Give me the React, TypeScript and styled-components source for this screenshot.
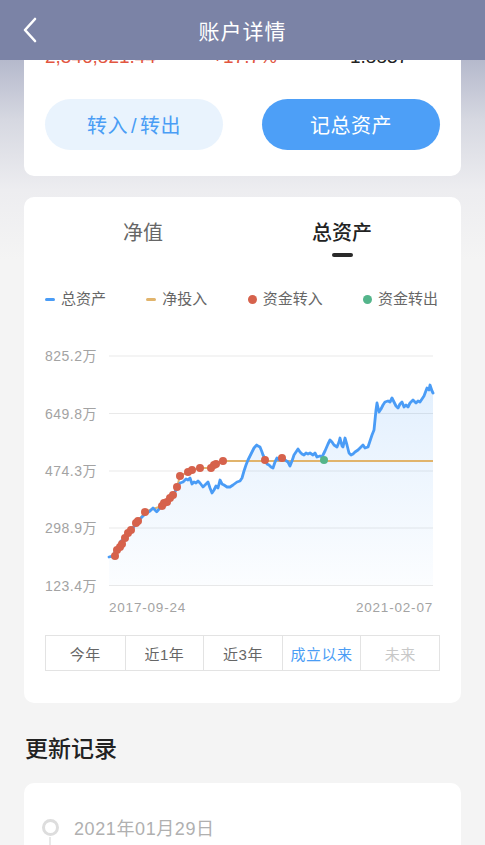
import React from "react";
import styled, { createGlobalStyle } from "styled-components";

const GlobalStyle = createGlobalStyle`
  html, body {
    margin: 0;
    padding: 0;
    background: #f4f4f4;
    font-family: "Liberation Sans", "Noto Sans CJK SC", sans-serif;
  }
  * { box-sizing: border-box; }
`;

const Page = styled.div`
  position: relative;
  width: 485px;
  height: 845px;
  overflow: hidden;
  padding: 0 24px;
  background: linear-gradient(
    180deg,
    #a9aec5 0px,
    #b5b9cc 60px,
    #d6d8e1 120px,
    #ededf0 190px,
    #f4f4f4 260px
  );
`;

const Header = styled.header`
  position: absolute;
  top: 0;
  left: 0;
  right: 0;
  height: 60px;
  background: #7b83a6;
  display: flex;
  align-items: center;
  justify-content: center;
  z-index: 10;
`;

const HeaderTitle = styled.h1`
  margin: 0;
  color: #ffffff;
  font-size: 21px;
  font-weight: 400;
  letter-spacing: 1px;
`;

const BackButton = styled.button`
  position: absolute;
  left: 18px;
  top: 16px;
  width: 24px;
  height: 28px;
  padding: 0;
  border: none;
  background: transparent;
  display: flex;
  align-items: center;
  justify-content: center;
`;

const Card = styled.section`
  background: #ffffff;
  border-radius: 10px;
`;

const SummaryCard = styled(Card)`
  padding: 45px 21px 26px;
`;

const StatsRow = styled.div`
  display: flex;
  align-items: baseline;
  font-size: 19px;
  line-height: 24px;
  height: 24px;
`;

const Stat = styled.span<{ $color: string; $width: number }>`
  color: ${(p) => p.$color};
  width: ${(p) => p.$width}px;
  white-space: nowrap;
`;

const ButtonRow = styled.div`
  display: flex;
  justify-content: space-between;
  margin-top: 30px;
`;

const PillButton = styled.button<{ $primary?: boolean }>`
  width: 178px;
  height: 51px;
  border-radius: 26px;
  border: none;
  font-family: inherit;
  font-size: 20px;
  letter-spacing: 0.5px;
  background: ${(p) => (p.$primary ? "#4d9ff7" : "#e9f3fd")};
  color: ${(p) => (p.$primary ? "#ffffff" : "#4a9df5")};
`;

const Slash = styled.span`
  margin: 0 3px;
`;

const ChartCard = styled(Card)`
  margin-top: 21px;
  padding: 22px 0 32px;
`;

const Tabs = styled.div`
  display: flex;
  padding: 0 19.5px;
`;

const Tab = styled.div<{ $active?: boolean }>`
  flex: 1;
  display: flex;
  flex-direction: column;
  align-items: center;
  font-size: 20px;
  line-height: 28px;
  font-weight: ${(p) => (p.$active ? 500 : 400)};
  color: ${(p) => (p.$active ? "#222222" : "#666666")};
`;

const TabIndicator = styled.span<{ $visible?: boolean }>`
  margin-top: 6px;
  width: 21px;
  height: 4px;
  border-radius: 2px;
  background: ${(p) => (p.$visible ? "#2a2a2a" : "transparent")};
`;

const Legend = styled.div`
  display: flex;
  justify-content: space-between;
  padding: 0 23px 0 21px;
  margin-top: 32px;
`;

const LegendItem = styled.div`
  display: flex;
  align-items: center;
  gap: 6px;
  font-size: 15px;
  line-height: 20px;
  color: #666666;
`;

const LegendDash = styled.span<{ $color: string }>`
  width: 10px;
  height: 3px;
  border-radius: 2px;
  background: ${(p) => p.$color};
`;

const LegendDot = styled.span<{ $color: string }>`
  width: 9px;
  height: 9px;
  border-radius: 50%;
  background: ${(p) => p.$color};
`;

const ChartSvg = styled.svg`
  display: block;
  margin-top: 31px;
`;

const PeriodBar = styled.div`
  display: grid;
  grid-template-columns: repeat(5, 1fr);
  margin: 15px 21px 0;
  height: 36px;
  border: 1px solid #e3e3e3;
`;

const PeriodCell = styled.div<{ $state: "normal" | "active" | "disabled" }>`
  display: flex;
  align-items: center;
  justify-content: center;
  font-size: 15px;
  letter-spacing: 0.5px;
  border-left: 1px solid #e3e3e3;
  &:first-child { border-left: none; }
  color: ${(p) =>
    p.$state === "active" ? "#4a9df5" : p.$state === "disabled" ? "#c8c8c8" : "#666666"};
`;

const SectionTitle = styled.h2`
  margin: 31px 0 0 1px;
  font-size: 23px;
  line-height: 30px;
  font-weight: 500;
  color: #222222;
`;

const RecordCard = styled(Card)`
  margin-top: 19px;
  padding: 32px 20px 40px;
  min-height: 120px;
`;

const RecordRow = styled.div`
  display: flex;
  align-items: center;
  gap: 18px;
  height: 24px;
`;

const TimelineMark = styled.div`
  position: relative;
  flex: 0 0 12px;
  width: 12px;
  height: 24px;
  display: flex;
  align-items: center;
  justify-content: center;
  &::before {
    content: "";
    flex: 0 0 11px;
    width: 11px;
    height: 11px;
    border-radius: 50%;
    border: 3px solid #dddddd;
  }
  &::after {
    content: "";
    position: absolute;
    left: 5px;
    top: 22px;
    width: 2px;
    height: 40px;
    background: #e8e8e8;
  }
`;

const RecordDate = styled.span`
  font-size: 18px;
  letter-spacing: 0.6px;
  color: #b0b0b0;
`;

type Pt = [number, number];

const bluePts: Pt[] = [
  [109, 557], [113, 556], [115, 552], [116.7, 548], [119, 546], [121, 541], [123, 540], [126.7, 536.7],
  [129, 534], [131, 530], [133, 528], [136.7, 523], [139, 520], [141, 518], [143, 516], [146.7, 513],
  [150, 511], [153, 508], [156.7, 511.7], [160, 508], [163, 505], [166, 502], [168, 499], [170, 498],
  [173, 495], [176, 490], [178, 486], [180, 483], [183, 482], [186, 479], [188, 480], [190, 478],
  [192, 484], [194, 482], [196, 483], [198, 481], [200, 483], [203, 487], [206, 484], [208, 482],
  [210, 488], [212, 493], [214, 490], [216, 486], [218, 488], [220, 480], [222, 484], [224, 485],
  [227, 487], [230, 487], [233, 485], [237, 482], [240, 481], [242, 478], [244, 471], [246, 465],
  [248, 460], [251, 454], [254, 448], [256.7, 445], [258, 446], [260, 447], [262, 452], [263, 455],
  [265, 459], [267, 464], [269, 465], [271, 467], [273, 468], [275, 462], [277, 458], [279, 460],
  [281, 458], [283, 457], [285, 460], [288, 462], [290, 466], [292, 461], [294, 455], [296, 452],
  [298, 449], [300, 452], [302, 454], [304, 455], [306, 453], [308, 454], [310, 453], [313, 455],
  [315, 453], [317, 457], [320, 456], [322, 457], [325, 451], [328, 444], [330, 440], [332, 442],
  [334, 445], [337, 447], [339, 442], [340, 438], [342, 446], [343, 447], [345, 438], [347, 445],
  [349, 453], [351, 455], [353, 454], [355, 452], [358, 450], [361, 447], [363, 445], [365, 448],
  [368, 447], [370, 441], [372, 435], [374, 430], [375, 420], [376, 410], [377, 403], [379, 412],
  [381, 409], [383, 405], [385, 402], [388, 401], [390, 402], [392, 398], [394, 402], [396, 406],
  [398, 408], [400, 404], [402, 402], [404, 407], [406, 405], [408, 407], [410, 403], [413, 400],
  [416, 403], [418, 401], [420, 402], [422, 399], [424, 396], [427, 388], [429, 390], [430, 385],
  [432, 391], [433, 393],
];

const orangePts: Pt[] = [
  [109, 557], [115, 556], [117, 550], [120, 547], [125, 538], [128, 533], [136, 523], [138, 521],
  [145, 512], [150, 510], [162, 506], [163, 503], [167, 502], [170, 498], [173, 495], [177, 487],
  [180, 476], [188, 472], [192, 470], [200, 468], [212, 468], [215, 464], [223, 461], [433, 461],
];

const redDots: Pt[] = [
  [115, 556], [117, 550], [120, 547], [122, 544], [125, 538], [128, 533], [131, 530], [136, 523],
  [138, 521], [145, 512], [162, 506], [164, 503], [167, 502], [170, 498], [173, 495], [177, 487],
  [180, 476], [188, 472], [192, 470], [200, 468], [211, 468], [214, 465], [216, 464], [223, 461],
  [265, 460], [282, 458],
];

const greenDots: Pt[] = [[324, 460]];

const toPath = (pts: Pt[]) =>
  pts.map(([x, y], i) => `${i === 0 ? "M" : "L"}${x} ${y}`).join(" ");

const gridYs = [356, 413.5, 471, 528, 585.5];
const yLabels = ["825.2万", "649.8万", "474.3万", "298.9万", "123.4万"];

const Chart: React.FC = () => {
  const blue = toPath(bluePts);
  const area = `${blue} L433 585.5 L109 585.5 Z`;
  return (
    <ChartSvg width={437} height={280} viewBox="24 340 437 280">
      <defs>
        <linearGradient id="areaFill" x1="0" y1="0" x2="0" y2="1">
          <stop offset="0%" stopColor="#4d9ff7" stopOpacity={0.16} />
          <stop offset="100%" stopColor="#4d9ff7" stopOpacity={0.02} />
        </linearGradient>
      </defs>
      {gridYs.map((y, i) => (
        <g key={y}>
          <line x1={109} x2={433} y1={y} y2={y} stroke="#e9e9e9" strokeWidth={1} />
          <text
            x={97}
            y={y + 5}
            textAnchor="end"
            fontSize={14}
            fill="#a3a3a3"
            letterSpacing={0.5}
            fontFamily='"Liberation Sans", "Noto Sans CJK SC", sans-serif'
          >
            {yLabels[i]}
          </text>
        </g>
      ))}
      <path d={area} fill="url(#areaFill)" />
      <path d={toPath(orangePts)} fill="none" stroke="#e1b46c" strokeWidth={2} strokeLinejoin="round" />
      <path d={blue} fill="none" stroke="#4a9cf6" strokeWidth={2.8} strokeLinejoin="round" strokeLinecap="round" />
      {redDots.map(([x, y], i) => (
        <circle key={`r${i}`} cx={x} cy={y} r={4} fill="#d6624c" />
      ))}
      {greenDots.map(([x, y], i) => (
        <circle key={`g${i}`} cx={x} cy={y} r={4} fill="#54b58b" />
      ))}
      <text
        x={109}
        y={612}
        fontSize={13.5}
        fill="#a3a3a3"
        letterSpacing={0.8}
        fontFamily='"Liberation Sans", sans-serif'
      >
        2017-09-24
      </text>
      <text
        x={433}
        y={612}
        textAnchor="end"
        fontSize={13.5}
        fill="#a3a3a3"
        letterSpacing={0.8}
        fontFamily='"Liberation Sans", sans-serif'
      >
        2021-02-07
      </text>
    </ChartSvg>
  );
};

const periods: { label: string; state: "normal" | "active" | "disabled" }[] = [
  { label: "今年", state: "normal" },
  { label: "近1年", state: "normal" },
  { label: "近3年", state: "normal" },
  { label: "成立以来", state: "active" },
  { label: "未来", state: "disabled" },
];

export default function App() {
  return (
    <>
      <GlobalStyle />
      <Page>
        <Header>
          <BackButton aria-label="返回">
            <svg width="16" height="26" viewBox="0 0 16 26">
              <path d="M13 2 L3 13 L13 24" fill="none" stroke="#ffffff" strokeWidth={2.6} strokeLinecap="round" strokeLinejoin="round" />
            </svg>
          </BackButton>
          <HeaderTitle>账户详情</HeaderTitle>
        </Header>

        <SummaryCard>
          <StatsRow>
            <Stat $color="#e2553f" $width={167}>2,546,821.44</Stat>
            <Stat $color="#e2553f" $width={138}>+17.7%</Stat>
            <Stat $color="#222222" $width={90}>1.8837</Stat>
          </StatsRow>
          <ButtonRow>
            <PillButton>
              转入<Slash>/</Slash>转出
            </PillButton>
            <PillButton $primary>记总资产</PillButton>
          </ButtonRow>
        </SummaryCard>

        <ChartCard>
          <Tabs>
            <Tab>
              净值
              <TabIndicator />
            </Tab>
            <Tab $active>
              总资产
              <TabIndicator $visible />
            </Tab>
          </Tabs>
          <Legend>
            <LegendItem>
              <LegendDash $color="#4a9cf6" />
              总资产
            </LegendItem>
            <LegendItem>
              <LegendDash $color="#e1b46c" />
              净投入
            </LegendItem>
            <LegendItem>
              <LegendDot $color="#d6624c" />
              资金转入
            </LegendItem>
            <LegendItem>
              <LegendDot $color="#54b58b" />
              资金转出
            </LegendItem>
          </Legend>
          <Chart />
          <PeriodBar>
            {periods.map((p) => (
              <PeriodCell key={p.label} $state={p.state}>
                {p.label}
              </PeriodCell>
            ))}
          </PeriodBar>
        </ChartCard>

        <SectionTitle>更新记录</SectionTitle>

        <RecordCard>
          <RecordRow>
            <TimelineMark />
            <RecordDate>2021年01月29日</RecordDate>
          </RecordRow>
        </RecordCard>
      </Page>
    </>
  );
}
